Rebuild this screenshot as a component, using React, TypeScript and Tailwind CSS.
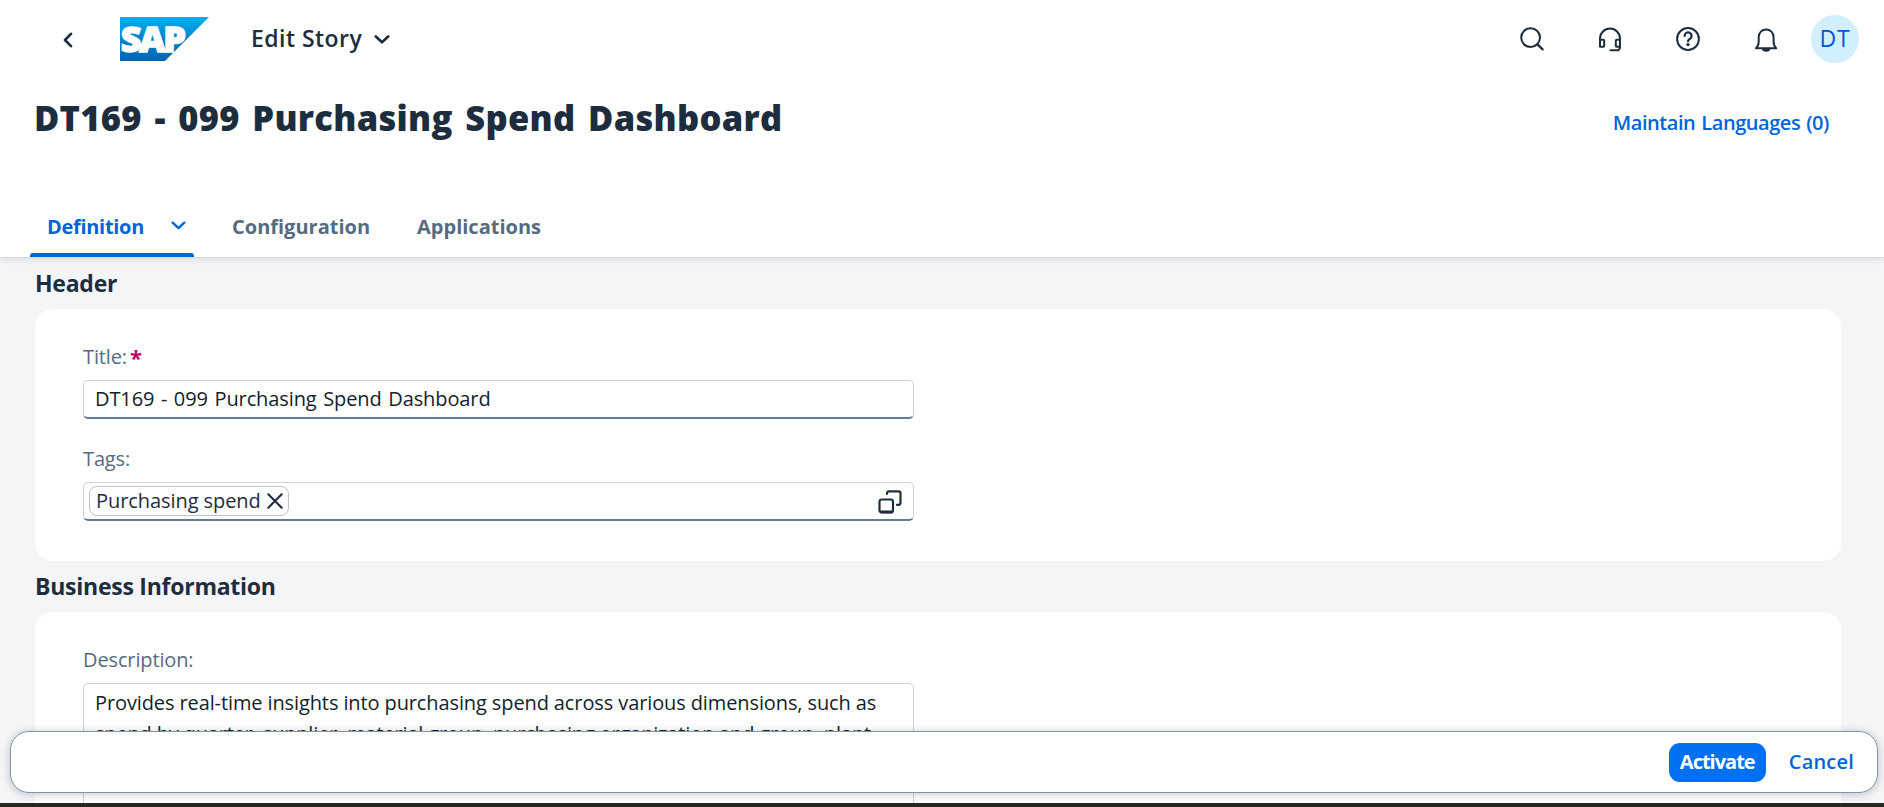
import type { ReactNode } from "react";

function SapLogo() {
  return (
    <svg width="90" height="44" viewBox="0 0 90 44" className="block overflow-visible">
      <defs>
        <linearGradient id="sapBlue" x1="0" y1="0" x2="0" y2="1">
          <stop offset="0" stopColor="#00b0ef" />
          <stop offset="0.5" stopColor="#0084cc" />
          <stop offset="1" stopColor="#0063b1" />
        </linearGradient>
      </defs>
      <path d="M0 0h89L45 44H0z" fill="url(#sapBlue)" />
      <text
        x="0.8"
        y="34.7"
        letterSpacing="-2.2"
        fontFamily="Open Sans, sans-serif"
        fontWeight="800"
        fontSize="36"
        fill="#fff"
        stroke="#fff"
        strokeWidth="1.5"
      >
        SAP
      </text>
    </svg>
  );
}

function Chevron({ className }: { className: string }) {
  return (
    <svg viewBox="0 0 16 9" className={className} fill="none" stroke="currentColor" strokeLinecap="round" strokeLinejoin="round">
      <path d="M1.8 1.5 8 7.3l6.2-5.8" strokeWidth="2.6" />
    </svg>
  );
}

function ShellIcon({ children }: { children: ReactNode }) {
  return (
    <svg
      width="26"
      height="26"
      viewBox="0 0 26 26"
      className="block shrink-0"
      fill="none"
      stroke="currentColor"
      strokeWidth="2"
      strokeLinecap="round"
      strokeLinejoin="round"
    >
      {children}
    </svg>
  );
}

function ShellBar() {
  return (
    <div className="flex h-[78px] shrink-0 items-center pr-[25px] pl-[63px]">
      <svg width="10" height="16" viewBox="0 0 10 16" className="mt-[1px] block" fill="none" stroke="currentColor" strokeWidth="2.6" strokeLinecap="round" strokeLinejoin="round">
        <path d="M8 1.8 2 8l6 6.2" />
      </svg>
      <div className="ml-[47px]">
        <SapLogo />
      </div>
      <div className="ml-[41px] flex items-center">
        <span className="-mt-[3px] text-[23px] leading-8 font-semibold tracking-[0.45px]">Edit Story</span>
        <Chevron className="ml-[12px] h-[9px] w-4" />
      </div>
      <div className="ml-auto flex items-center">
        <div className="flex items-center gap-[52px]">
          <ShellIcon>
            <circle cx="11.6" cy="11.6" r="9.4" />
            <path d="m18.4 18.4 5.2 5" strokeWidth="2.3" />
          </ShellIcon>
          <ShellIcon>
            <path d="M3 20.5V12.5a10 10 0 0 1 20 0v8.8a3 3 0 0 1-3 3h-6.5" />
            <path d="M3 13.8h3.2a1 1 0 0 1 1 1v5a1 1 0 0 1-1 1H4a1 1 0 0 1-1-1zM23 13.8h-3.2a1 1 0 0 0-1 1v5a1 1 0 0 0 1 1H22a1 1 0 0 0 1-1z" />
          </ShellIcon>
          <ShellIcon>
            <circle cx="13" cy="13" r="10.9" />
            <path d="M9.6 9.9a3.5 3.5 0 1 1 5.6 2.8c-1.3.9-2.2 1.4-2.2 2.6" strokeWidth="2.2" />
            <circle cx="13" cy="18.6" r="1.7" fill="currentColor" stroke="none" />
          </ShellIcon>
          <ShellIcon>
            <path d="M3 22.2c2-1.9 2.7-3.9 2.7-6.7v-4.6a7.3 7.3 0 0 1 14.9 0v4.6c0 2.8.6 4.8 2.6 6.700z" />
            <path d="M9 22.500h8.200a4.100 3.200 0 0 1-8.200 0z" fill="currentColor" stroke="none" />
          </ShellIcon>
        </div>
        <div className="ml-[32px] flex size-12 items-center justify-center rounded-full bg-[#d1efff] pb-[2px] text-[23px] leading-none tracking-[0.8px] text-[#0057d2]">
          DT
        </div>
      </div>
    </div>
  );
}

function Tabs() {
  return (
    <div className="mt-auto flex h-[60px] pl-[30px] text-[20px] font-bold text-[#556b82]">
      <div className="flex w-[164px] flex-col text-[#0064d9]">
        <div className="flex h-14 items-center pt-[3px] pl-[17px]">
          <span className="tracking-[-0.3px]">Definition</span>
          <Chevron className="-mt-[3px] ml-[27px] h-[9px] w-[15px]" />
        </div>
        <div className="h-1 rounded-t-[3px] bg-[#0064d9]" />
      </div>
      <div className="flex h-14 items-center pt-[3px] pl-[38px]">Configuration</div>
      <div className="flex h-14 items-center pt-[3px] pl-[47px]">Applications</div>
    </div>
  );
}

function SectionTitle({ children }: { children: ReactNode }) {
  return <h2 className="flex h-[51px] shrink-0 items-center pl-[35px] text-[23px] font-bold tracking-[-0.25px]">{children}</h2>;
}

function Label({ children, required }: { children: ReactNode; required?: boolean }) {
  return (
    <div className="flex h-6 items-center pt-[2px] text-[20px] tracking-[-0.13px] text-[#556b82]">
      {children}
      {required && <span className="ml-[3px] text-[22px] font-bold text-[#ba066c]">*</span>}
    </div>
  );
}

function Field({ children }: { children: ReactNode }) {
  return (
    <div className="flex h-[39px] w-[831px] items-center overflow-hidden rounded-[5px] border border-b-2 border-[#ccd3da] border-b-[#677b90] bg-white">
      {children}
    </div>
  );
}

export default function App() {
  return (
    <div className="relative flex h-[807px] w-full flex-col overflow-hidden bg-[#f4f5f7] font-['Open_Sans','Noto_Sans',sans-serif] text-[#1d2d3e]">
      <header className="z-10 flex h-[258px] shrink-0 flex-col border-b border-[#d9dbdd] bg-white shadow-[0_2px_6px_rgba(34,53,72,0.12)]">
        <ShellBar />
        <div className="flex h-[82px] items-center justify-between pr-[55px] pl-[34px]">
          <h1 className="-mt-[2px] text-[34.5px] leading-[46px] font-extrabold tracking-[0.3px] [word-spacing:3.3px]">DT169 - 099 Purchasing Spend Dashboard</h1>
          <a className="mt-[8px] text-[20px] font-semibold tracking-[-0.44px] [word-spacing:1.2px] text-[#0064d9]">Maintain Languages (0)</a>
        </div>
        <Tabs />
      </header>

      <main className="flex flex-1 flex-col overflow-hidden">
        <SectionTitle>Header</SectionTitle>
        <section className="mr-[43px] ml-[35px] h-[252px] shrink-0 rounded-[18px] bg-white px-12 pt-[35px]">
          <Label required>Title:</Label>
          <div className="mt-[12px]">
            <Field>
              <span className="pl-[11px] text-[20px] tracking-[-0.1px] text-[#131e29] [word-spacing:1.5px]">DT169 - 099 Purchasing Spend Dashboard</span>
            </Field>
          </div>
          <div className="mt-[27px]">
            <Label>Tags:</Label>
          </div>
          <div className="mt-[12px]">
            <Field>
              <div className="ml-[5px] flex h-[30px] items-center rounded-[8px] border border-[#bcc3ca] pr-[5px] pl-[6px]">
                <span className="-mt-px text-[20px] leading-7 tracking-[-0.07px]">Purchasing spend</span>
                <svg width="16" height="16" viewBox="0 0 16 16" className="ml-[6px] block" fill="none" stroke="currentColor" strokeWidth="2.1" strokeLinecap="round">
                  <path d="m1.3 1.3 13.4 13.4M14.7 1.3 1.3 14.7" />
                </svg>
              </div>
              <svg width="24" height="24" viewBox="0 0 24 24" className="mt-[2px] mr-[11px] ml-auto block" fill="none" stroke="currentColor" strokeWidth="2.2" strokeLinecap="round">
                <rect x="1.5" y="9.5" width="13.5" height="13" rx="2.3" />
                <path d="M2.8 21.9h11" strokeWidth="2.6" />
                <path d="M9 4V3.3a2 2 0 0 1 2-2h9.5a2 2 0 0 1 2 2v9.5a2 2 0 0 1-2 2H19" />
              </svg>
            </Field>
          </div>
        </section>

        <SectionTitle>Business Information</SectionTitle>
        <section className="mr-[43px] ml-[35px] h-[252px] shrink-0 rounded-t-[18px] bg-white px-12 pt-[35px]">
          <Label>Description:</Label>
          <div className="mt-[12px] h-[200px] w-[831px] rounded-[5px] border border-[#ccd3da] pt-[3px] pl-[11px] text-[20px] leading-[31px] text-[#131e29]">
            <p className="tracking-[-0.11px]">Provides real-time insights into purchasing spend across various dimensions, such as</p>
            <p className="tracking-[-0.17px]">spend by quarter, supplier, material group, purchasing organization and group, plant,</p>
          </div>
        </section>
      </main>

      <footer className="absolute right-[6px] bottom-[14px] left-[10px] z-20 flex h-[62px] items-center justify-end rounded-[19px] border border-[#8593a3] bg-white pr-[23px] shadow-[0_1px_8px_rgba(34,53,72,0.28)]">
        <button className="flex h-[39px] w-[97px] items-center justify-center rounded-[11px] bg-[#0070f2] text-[20px] font-bold tracking-[-1px] text-white">
          Activate
        </button>
        <button className="ml-[23px] text-[20px] font-semibold tracking-[0.2px] text-[#0064d9]">Cancel</button>
      </footer>
      <div className="z-30 h-1 shrink-0 bg-[#27271f]" />
    </div>
  );
}
